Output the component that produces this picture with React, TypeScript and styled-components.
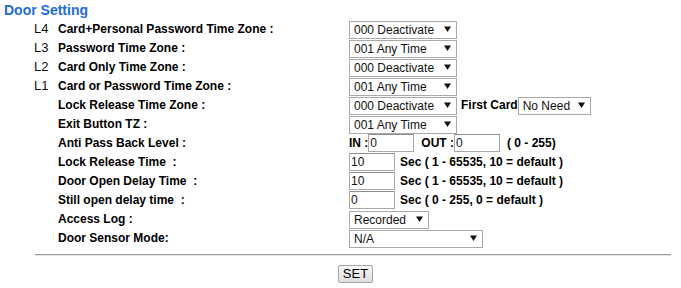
import styled, { createGlobalStyle } from "styled-components";

const GlobalStyle = createGlobalStyle`
  body {
    margin: 0;
    background: #fff;
    font-family: "Liberation Sans", Arial, sans-serif;
    color: #000;
  }
`;

interface SelectProps {
  value: string;
  options: string[];
  width: number;
}

const Select = ({ value, options, width }: SelectProps) => (
  <SelectWrap $width={width}>
    <SelectField defaultValue={value}>
      {options.map((o) => (
        <option key={o}>{o}</option>
      ))}
    </SelectField>
    <Arrow viewBox="0 0 7 6" width={7} height={6}>
      <polygon points="0,0.5 7,0.5 3.5,6" fill="#111" />
    </Arrow>
  </SelectWrap>
);

const tzOptions = ["000 Deactivate", "001 Any Time"];

const App = () => {
  return (
    <Page>
      <GlobalStyle />
      <Title>Door Setting</Title>
      <Rows>
        <Row>
          <Level>L4</Level>
          <Label>Card+Personal Password Time Zone :</Label>
          <Controls>
            <Select value="000 Deactivate" options={tzOptions} width={108} />
          </Controls>
        </Row>
        <Row>
          <Level>L3</Level>
          <Label>Password Time Zone :</Label>
          <Controls>
            <Select value="001 Any Time" options={tzOptions} width={108} />
          </Controls>
        </Row>
        <Row>
          <Level>L2</Level>
          <Label>Card Only Time Zone :</Label>
          <Controls>
            <Select value="000 Deactivate" options={tzOptions} width={108} />
          </Controls>
        </Row>
        <Row>
          <Level>L1</Level>
          <Label>Card or Password Time Zone :</Label>
          <Controls>
            <Select value="001 Any Time" options={tzOptions} width={108} />
          </Controls>
        </Row>
        <Row>
          <Level />
          <Label>Lock Release Time Zone :</Label>
          <Controls>
            <Select value="000 Deactivate" options={tzOptions} width={108} />
            <Inline $gap={4}>First Card</Inline>
            <Select value="No Need" options={["No Need", "Need"]} width={73} />
          </Controls>
        </Row>
        <Row>
          <Level />
          <Label>Exit Button TZ :</Label>
          <Controls>
            <Select value="001 Any Time" options={tzOptions} width={108} />
          </Controls>
        </Row>
        <Row>
          <Level />
          <Label>Anti Pass Back Level :</Label>
          <Controls>
            <Inline>IN :</Inline>
            <TextInput defaultValue="0" $width={46} />
            <Inline $gap={7}>OUT :</Inline>
            <TextInput defaultValue="0" $width={46} />
            <Inline $gap={7}>( 0 - 255)</Inline>
          </Controls>
        </Row>
        <Row>
          <Level />
          <Label>Lock Release Time&nbsp; :</Label>
          <Controls>
            <TextInput defaultValue="10" $width={46} />
            <Inline $gap={5}>Sec ( 1 - 65535, 10 = default )</Inline>
          </Controls>
        </Row>
        <Row>
          <Level />
          <Label>Door Open Delay Time&nbsp; :</Label>
          <Controls>
            <TextInput defaultValue="10" $width={46} />
            <Inline $gap={5}>Sec ( 1 - 65535, 10 = default )</Inline>
          </Controls>
        </Row>
        <Row>
          <Level />
          <Label>Still open delay time&nbsp; :</Label>
          <Controls>
            <TextInput defaultValue="0" $width={46} />
            <Inline $gap={5}>Sec ( 0 - 255, 0 = default )</Inline>
          </Controls>
        </Row>
        <Row>
          <Level />
          <Label>Access Log :</Label>
          <Controls>
            <Select value="Recorded" options={["Recorded", "Not Recorded"]} width={80} />
          </Controls>
        </Row>
        <Row>
          <Level />
          <Label>Door Sensor Mode:</Label>
          <Controls>
            <Select value="N/A" options={["N/A", "N.O.", "N.C."]} width={134} />
          </Controls>
        </Row>
      </Rows>
      <Divider />
      <Footer>
        <SetButton type="button">SET</SetButton>
      </Footer>
    </Page>
  );
};
export default App;

const Page = styled.div`
  width: 681px;
  padding-top: 2px;
`;

const Title = styled.h3`
  margin: 0 0 1px;
  padding-left: 4px;
  font-size: 14px;
  line-height: 17px;
  font-weight: bold;
  color: #1e6ed6;
`;

const Rows = styled.div`
  display: flex;
  flex-direction: column;
  gap: 1px;
  margin-left: 34px;
`;

const Row = styled.div`
  display: grid;
  grid-template-columns: 24px 291px auto;
  align-items: center;
  height: 18px;
`;

const Level = styled.span`
  font-size: 13px;
  line-height: 18px;
  color: #111;
`;

const Label = styled.span`
  font-size: 12px;
  font-weight: bold;
  line-height: 18px;
  white-space: nowrap;
`;

const Controls = styled.div`
  display: flex;
  align-items: center;
  height: 18px;
`;

const Inline = styled.span<{ $gap?: number }>`
  margin-left: ${(p) => p.$gap ?? 0}px;
  font-size: 12px;
  font-weight: bold;
  line-height: 18px;
  white-space: nowrap;
`;

const SelectWrap = styled.span<{ $width: number }>`
  position: relative;
  display: inline-block;
  width: ${(p) => p.$width}px;
  height: 18px;
`;

const SelectField = styled.select`
  appearance: none;
  width: 100%;
  height: 18px;
  margin: 0;
  padding: 0 14px 0 4px;
  box-sizing: border-box;
  border: 1px solid #a9a9a9;
  border-radius: 0;
  background: #fff;
  font-family: "Liberation Sans", Arial, sans-serif;
  font-size: 12px;
  line-height: 16px;
  color: #111;
  outline: none;
`;

const Arrow = styled.svg`
  position: absolute;
  right: 6px;
  top: 6px;
  pointer-events: none;
`;

const TextInput = styled.input<{ $width: number }>`
  width: ${(p) => p.$width}px;
  height: 18px;
  margin: 0;
  padding: 0 1px;
  box-sizing: border-box;
  border: 1px solid #a9a9a9;
  border-top-color: #8f8f8f;
  background: #fff;
  font-family: "Liberation Sans", Arial, sans-serif;
  font-size: 12px;
  color: #111;
  outline: none;
`;

const Divider = styled.hr`
  margin: 7px 10px 0 35px;
  height: 0;
  border: 0;
  border-top: 1px solid #9a9a9a;
  border-bottom: 1px solid #e4e4e4;
`;

const Footer = styled.div`
  display: flex;
  justify-content: center;
  margin: 9px 5px 0 35px;
`;

const SetButton = styled.button`
  width: 35px;
  height: 18px;
  padding: 0;
  border: 1px solid #a6a6a6;
  border-radius: 2px;
  background: linear-gradient(#f7f7f7, #dedede);
  font-family: "Liberation Sans", Arial, sans-serif;
  font-size: 13px;
  line-height: 16px;
  color: #000;
`;
